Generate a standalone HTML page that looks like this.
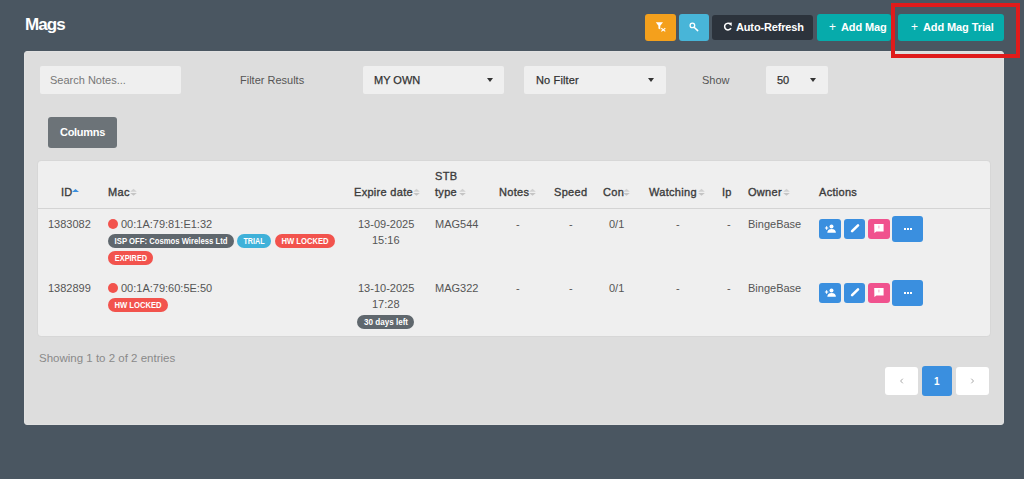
<!DOCTYPE html>
<html><head><meta charset="utf-8">
<style>
html,body{margin:0;padding:0;}
body{width:1024px;height:479px;overflow:hidden;background:#4a5661;position:relative;font-family:"Liberation Sans",sans-serif;}
.a{position:absolute;}
.t{position:absolute;white-space:nowrap;line-height:1;}
.b{font-weight:bold;}
.btn{position:absolute;border-radius:3px;}
.card{left:24px;top:51px;width:980px;height:374px;background:#dddddd;border-radius:3px;box-sizing:border-box;border:1px solid #e1e1e1;}
.inp{position:absolute;background:#efefef;border-radius:2px;top:66px;height:28px;}
.arrow{position:absolute;width:0;height:0;border-left:3.5px solid transparent;border-right:3.5px solid transparent;border-top:4px solid #333;}
.panel{left:38px;top:161px;width:952px;height:175px;background:#efefef;border-radius:3px;box-shadow:0 0 1.5px rgba(0,0,0,0.12);}
.hline{left:38px;top:208px;width:952px;height:1px;background:#d4d4d4;}
.h{font-size:11px;font-weight:normal;color:#3c3c3c;-webkit-text-stroke:0.35px #3c3c3c;letter-spacing:0.3px;}
.c{font-size:11px;color:#555;}
.sort{position:absolute;width:7px;height:8px;}
.badge{position:absolute;height:14px;border-radius:7px;color:#fff;font-size:9px;font-weight:bold;line-height:14px;text-align:center;white-space:nowrap;}
.badge span{position:absolute;left:50%;top:0;transform-origin:0 50%;}
.gray{background:#5f676d;}
.red{background:#f2534d;}
.cyan{background:#3fb1d9;}
.dot{position:absolute;width:10px;height:10px;border-radius:50%;background:#f2534d;}
.ab{position:absolute;border-radius:3px;background:#3a8fdf;}
.pk{background:#f0528e;}
.pg{position:absolute;background:#fff;border-radius:3px;}
</style></head>
<body>
<!-- title -->
<div class="t b" style="left:25px;top:16px;font-size:17px;color:#fff;letter-spacing:-0.9px;">Mags</div>

<!-- top buttons -->
<div class="btn" style="left:645px;top:14px;width:31px;height:27px;background:#f4a01c;"></div>
<div class="btn" style="left:679px;top:14px;width:30px;height:27px;background:#48b5d8;"></div>
<svg class="a" style="left:645px;top:14px;" width="31" height="26" viewBox="0 0 31 26"><path d="M10.8 8.3 L18 8.3 L15.3 11.8 L15.3 15.6 L13.4 14.6 L13.4 11.8 Z" fill="#fff"/><path d="M16.3 14.2 L20.3 17.4 M20.3 14.2 L16.3 17.4" stroke="#fff" stroke-width="1.1"/></svg>
<svg class="a" style="left:678px;top:14px;" width="31" height="26" viewBox="0 0 31 26"><circle cx="14.4" cy="11.4" r="2.3" fill="none" stroke="#fff" stroke-width="1.3"/><path d="M16.1 13.2 L19.7 16.6" stroke="#fff" stroke-width="1.5" stroke-linecap="round"/></svg>
<div class="btn" style="left:712px;top:15px;width:101px;height:25px;background:#2c333c;"></div>
<svg class="a" style="left:712px;top:14px;" width="30" height="26" viewBox="0 0 30 26"><path d="M18.5 10.2 A3.4 3.4 0 1 0 19.0 14.2" fill="none" stroke="#fff" stroke-width="1.5"/><path d="M16.2 8.9 L19.8 8.6 L19.6 12.2 Z" fill="#fff"/></svg>
<div class="t b" style="left:736px;top:22px;font-size:11px;color:#fff;letter-spacing:-0.15px;">Auto-Refresh</div>
<div class="btn" style="left:817px;top:14px;width:74px;height:27px;background:#06abab;"></div>
<div class="t" style="left:829px;top:21px;font-size:12px;color:#fff;">+</div>
<div class="t b" style="left:841px;top:22px;font-size:11px;color:#fff;letter-spacing:-0.12px;">Add Mag</div>
<div class="btn" style="left:898px;top:14px;width:106px;height:27px;background:#06abab;"></div>
<div class="t" style="left:911px;top:21px;font-size:12px;color:#fff;">+</div>
<div class="t b" style="left:923px;top:22px;font-size:11px;color:#fff;letter-spacing:-0.1px;">Add Mag Trial</div>

<!-- card -->
<div class="a card"></div>

<!-- red highlight box -->
<div class="a" style="left:891px;top:3px;width:121px;height:47px;border:4px solid #e01b1b;"></div>

<!-- filters -->
<div class="inp" style="left:40px;width:141px;"></div>
<div class="t" style="left:50px;top:75px;font-size:11px;color:#777;">Search Notes...</div>
<div class="t" style="left:240px;top:75px;font-size:11px;color:#555;">Filter Results</div>
<div class="inp" style="left:363px;width:141px;"></div>
<div class="t" style="left:374px;top:75px;font-size:11px;color:#333;-webkit-text-stroke:0.25px #333;">MY OWN</div>
<div class="arrow" style="left:487px;top:78px;"></div>
<div class="inp" style="left:524px;width:142px;"></div>
<div class="t" style="left:536px;top:75px;font-size:11px;color:#333;-webkit-text-stroke:0.25px #333;letter-spacing:0.15px;">No Filter</div>
<div class="arrow" style="left:648px;top:78px;"></div>
<div class="t" style="left:702px;top:75px;font-size:11px;color:#555;">Show</div>
<div class="inp" style="left:766px;width:62px;"></div>
<div class="t" style="left:777px;top:75px;font-size:11px;color:#333;-webkit-text-stroke:0.25px #333;">50</div>
<div class="arrow" style="left:810px;top:78px;"></div>

<!-- columns button -->
<div class="btn" style="left:48px;top:117px;width:69px;height:31px;background:#6c7378;"></div>
<div class="t b" style="left:60px;top:127px;font-size:11px;color:#fff;letter-spacing:-0.3px;">Columns</div>

<!-- table panel -->
<div class="a panel"></div>
<div class="a hline"></div>

<!-- headers -->
<div class="t h" style="left:61px;top:187px;">ID</div>
<div class="t h" style="left:108px;top:187px;">Mac</div>
<div class="t h" style="left:354px;top:187px;">Expire date</div>
<div class="t h" style="left:435px;top:171px;">STB</div>
<div class="t h" style="left:435px;top:187px;">type</div>
<div class="t h" style="left:499px;top:187px;">Notes</div>
<div class="t h" style="left:554px;top:187px;">Speed</div>
<div class="t h" style="left:603px;top:187px;">Con</div>
<div class="t h" style="left:649px;top:187px;">Watching</div>
<div class="t h" style="left:722px;top:187px;">Ip</div>
<div class="t h" style="left:748px;top:187px;">Owner</div>
<div class="t h" style="left:819px;top:187px;">Actions</div>

<svg class="a" style="left:72px;top:188px;" width="7" height="9" viewBox="0 0 7 9"><path d="M0 3.9 L3.5 1 L7 3.9 Z" fill="#3b8fde"/></svg>
<svg class="a" style="left:130px;top:188px;" width="7" height="9" viewBox="0 0 7 9"><path d="M0.2 3.7 L3.5 0.8 L6.8 3.7 Z" fill="#d0d0d0"/><path d="M0.2 4.9 L6.8 4.9 L3.5 7.8 Z" fill="#c4c4c4"/></svg>
<svg class="a" style="left:413px;top:188px;" width="7" height="9" viewBox="0 0 7 9"><path d="M0.2 3.7 L3.5 0.8 L6.8 3.7 Z" fill="#d0d0d0"/><path d="M0.2 4.9 L6.8 4.9 L3.5 7.8 Z" fill="#c4c4c4"/></svg>
<svg class="a" style="left:459px;top:188px;" width="7" height="9" viewBox="0 0 7 9"><path d="M0.2 3.7 L3.5 0.8 L6.8 3.7 Z" fill="#d0d0d0"/><path d="M0.2 4.9 L6.8 4.9 L3.5 7.8 Z" fill="#c4c4c4"/></svg>
<svg class="a" style="left:529px;top:188px;" width="7" height="9" viewBox="0 0 7 9"><path d="M0.2 3.7 L3.5 0.8 L6.8 3.7 Z" fill="#d0d0d0"/><path d="M0.2 4.9 L6.8 4.9 L3.5 7.8 Z" fill="#c4c4c4"/></svg>
<svg class="a" style="left:623px;top:188px;" width="7" height="9" viewBox="0 0 7 9"><path d="M0.2 3.7 L3.5 0.8 L6.8 3.7 Z" fill="#d0d0d0"/><path d="M0.2 4.9 L6.8 4.9 L3.5 7.8 Z" fill="#c4c4c4"/></svg>
<svg class="a" style="left:698px;top:188px;" width="7" height="9" viewBox="0 0 7 9"><path d="M0.2 3.7 L3.5 0.8 L6.8 3.7 Z" fill="#d0d0d0"/><path d="M0.2 4.9 L6.8 4.9 L3.5 7.8 Z" fill="#c4c4c4"/></svg>
<svg class="a" style="left:783px;top:188px;" width="7" height="9" viewBox="0 0 7 9"><path d="M0.2 3.7 L3.5 0.8 L6.8 3.7 Z" fill="#d0d0d0"/><path d="M0.2 4.9 L6.8 4.9 L3.5 7.8 Z" fill="#c4c4c4"/></svg>

<!-- row 1 -->
<div class="t c" style="left:48px;top:219px;">1383082</div>
<div class="dot" style="left:108px;top:219px;"></div>
<div class="t c" style="left:121px;top:219px;">00:1A:79:81:E1:32</div>
<div class="badge gray" style="left:108px;top:234px;width:126px;"><span style="transform:scaleX(0.856) translateX(-50%)">ISP OFF: Cosmos Wireless Ltd</span></div>
<div class="badge cyan" style="left:237px;top:234px;width:34px;"><span style="transform:scaleX(0.8) translateX(-50%)">TRIAL</span></div>
<div class="badge red" style="left:275px;top:234px;width:60px;"><span style="transform:scaleX(0.85) translateX(-50%)">HW LOCKED</span></div>
<div class="badge red" style="left:108px;top:251px;width:45px;"><span style="transform:scaleX(0.82) translateX(-50%)">EXPIRED</span></div>
<div class="t c" style="left:358px;top:219px;">13-09-2025</div>
<div class="t c" style="left:372px;top:235px;">15:16</div>
<div class="t c" style="left:435px;top:219px;">MAG544</div>
<div class="t c" style="left:516px;top:219px;">-</div>
<div class="t c" style="left:569px;top:219px;">-</div>
<div class="t c" style="left:609px;top:219px;">0/1</div>
<div class="t c" style="left:676px;top:219px;">-</div>
<div class="t c" style="left:727px;top:219px;">-</div>
<div class="t c" style="left:748px;top:219px;">BingeBase</div>
<div class="ab" style="left:819px;top:219px;width:22px;height:20px;"></div>
<div class="ab" style="left:844px;top:219px;width:21px;height:20px;"></div>
<div class="ab pk" style="left:868px;top:219px;width:22px;height:20px;"></div>
<div class="ab" style="left:892px;top:216px;width:31px;height:26px;"></div>
<svg class="a" style="left:819px;top:219px;" width="22" height="20" viewBox="0 0 22 20"><circle cx="12.5" cy="7.4" r="2" fill="#fff"/><path d="M8.3 13.8 Q8.3 9.9 12.6 9.9 Q16.9 9.9 16.9 13.8 Z" fill="#fff"/><path d="M5.9 9 H9.3 M7.6 7.3 V10.7" stroke="#fff" stroke-width="1.1"/></svg>
<svg class="a" style="left:844px;top:219px;" width="21" height="20" viewBox="0 0 21 20"><path d="M8.1 12.2 L14.0 6.3" stroke="#fff" stroke-width="2.6" stroke-linecap="round"/></svg>
<svg class="a" style="left:868px;top:219px;" width="22" height="20" viewBox="0 0 22 20"><path d="M6.2 5 H15.6 V12.4 H8.4 L6.4 14 Z" fill="#fff"/><rect x="10.4" y="6.6" width="1" height="2.8" fill="#f7a8c7"/></svg>
<svg class="a" style="left:892px;top:216px;" width="31" height="26" viewBox="0 0 31 26"><rect x="12" y="12" width="2" height="2" fill="#fff"/><rect x="15" y="12" width="2" height="2" fill="#fff"/><rect x="18" y="12" width="2" height="2" fill="#fff"/></svg>

<!-- row 2 -->
<div class="t c" style="left:48px;top:283px;">1382899</div>
<div class="dot" style="left:108px;top:283px;"></div>
<div class="t c" style="left:121px;top:283px;">00:1A:79:60:5E:50</div>
<div class="badge red" style="left:108px;top:298px;width:60px;"><span style="transform:scaleX(0.85) translateX(-50%)">HW LOCKED</span></div>
<div class="t c" style="left:358px;top:283px;">13-10-2025</div>
<div class="t c" style="left:372px;top:299px;">17:28</div>
<div class="badge gray" style="left:357px;top:315px;width:57px;"><span style="transform:scaleX(0.9) translateX(-50%)">30 days left</span></div>
<div class="t c" style="left:435px;top:283px;">MAG322</div>
<div class="t c" style="left:516px;top:283px;">-</div>
<div class="t c" style="left:569px;top:283px;">-</div>
<div class="t c" style="left:609px;top:283px;">0/1</div>
<div class="t c" style="left:676px;top:283px;">-</div>
<div class="t c" style="left:727px;top:283px;">-</div>
<div class="t c" style="left:748px;top:283px;">BingeBase</div>
<div class="ab" style="left:819px;top:283px;width:22px;height:20px;"></div>
<div class="ab" style="left:844px;top:283px;width:21px;height:20px;"></div>
<div class="ab pk" style="left:868px;top:283px;width:22px;height:20px;"></div>
<div class="ab" style="left:892px;top:280px;width:31px;height:26px;"></div>
<svg class="a" style="left:819px;top:283px;" width="22" height="20" viewBox="0 0 22 20"><circle cx="12.5" cy="7.4" r="2" fill="#fff"/><path d="M8.3 13.8 Q8.3 9.9 12.6 9.9 Q16.9 9.9 16.9 13.8 Z" fill="#fff"/><path d="M5.9 9 H9.3 M7.6 7.3 V10.7" stroke="#fff" stroke-width="1.1"/></svg>
<svg class="a" style="left:844px;top:283px;" width="21" height="20" viewBox="0 0 21 20"><path d="M8.1 12.2 L14.0 6.3" stroke="#fff" stroke-width="2.6" stroke-linecap="round"/></svg>
<svg class="a" style="left:868px;top:283px;" width="22" height="20" viewBox="0 0 22 20"><path d="M6.2 5 H15.6 V12.4 H8.4 L6.4 14 Z" fill="#fff"/><rect x="10.4" y="6.6" width="1" height="2.8" fill="#f7a8c7"/></svg>
<svg class="a" style="left:892px;top:280px;" width="31" height="26" viewBox="0 0 31 26"><rect x="12" y="12" width="2" height="2" fill="#fff"/><rect x="15" y="12" width="2" height="2" fill="#fff"/><rect x="18" y="12" width="2" height="2" fill="#fff"/></svg>

<!-- footer -->
<div class="t" style="left:39px;top:353px;font-size:11.5px;color:#8a8a8a;">Showing 1 to 2 of 2 entries</div>
<div class="pg" style="left:885px;top:367px;width:33px;height:28px;"></div>
<div class="pg" style="left:922px;top:366px;width:30px;height:30px;background:#3a8fdf;"></div>
<div class="pg" style="left:956px;top:367px;width:33px;height:28px;"></div>
<svg class="a" style="left:885px;top:367px;" width="33" height="28" viewBox="0 0 33 28"><path d="M17.8 11.7 L15.6 14 L17.8 16.3" fill="none" stroke="#a8a8a8" stroke-width="1"/></svg>
<svg class="a" style="left:956px;top:367px;" width="33" height="28" viewBox="0 0 33 28"><path d="M15.3 11.7 L17.5 14 L15.3 16.3" fill="none" stroke="#a8a8a8" stroke-width="1"/></svg>
<div class="t b" style="left:934px;top:377px;font-size:10px;color:#fff;">1</div>
</body></html>
